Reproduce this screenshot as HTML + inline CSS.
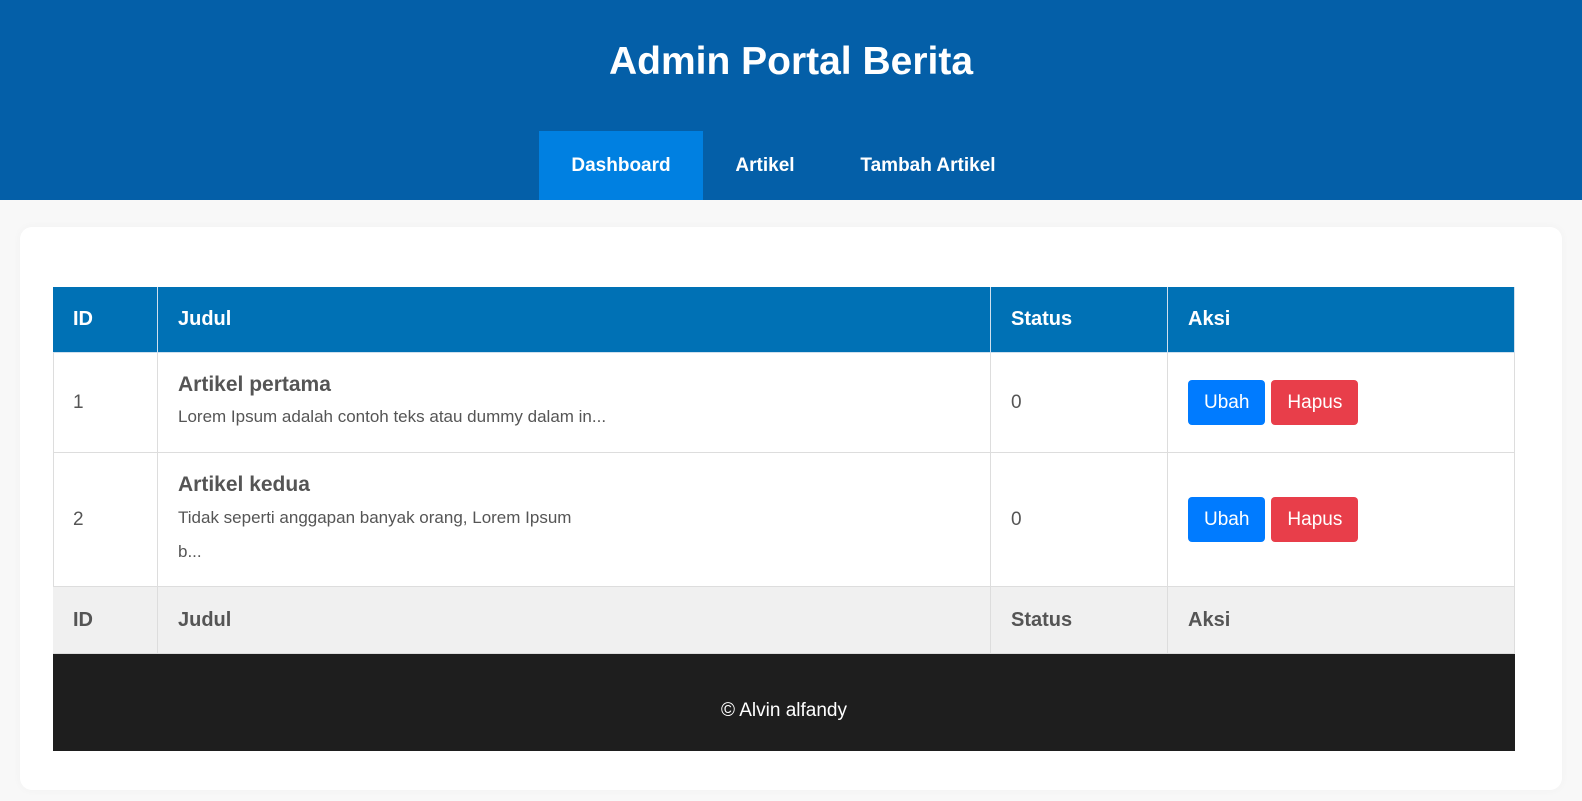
<!DOCTYPE html>
<html><head><meta charset="utf-8"><style>
*{box-sizing:border-box;margin:0;padding:0}
body{width:1582px;height:801px;background:#f8f8f8;font-family:"Liberation Sans",sans-serif;position:relative;overflow:hidden;color:#555}
.hdr{position:absolute;left:0;top:0;width:1582px;height:200px;background:#045fa8}
.hdr h1{position:absolute;top:40px;width:100%;text-align:center;color:#fff;font-size:39px;font-weight:bold}
.nav a{position:absolute;top:131px;height:69px;line-height:69px;color:#fff;font-weight:bold;font-size:19px;text-align:center}
.card{position:absolute;left:20px;top:227px;width:1542px;height:563px;background:#fff;border-radius:12px;box-shadow:0 0 10px rgba(0,0,0,.03)}
.c{position:absolute;border-right:1px solid #ddd;border-bottom:1px solid #ddd}
.th{background:#0071b5;color:#fff;font-weight:bold;font-size:20px;padding-left:20px;display:flex;align-items:center;border-color:#cfe0ee}
.tf{background:#f0f0f0;color:#555;font-weight:bold;font-size:20px;padding-left:20px;display:flex;align-items:center}
.td{font-size:19px;padding-left:20px;display:flex;align-items:center;color:#555}
.btn{display:inline-block;color:#fff;font-size:19px;height:45px;line-height:45px;border-radius:4px;padding:0 16px;margin-right:6px}
.b1{background:#007bff}.b2{background:#e83e4a}
</style></head><body>
<div class="hdr"><h1>Admin Portal Berita</h1>
<div class="nav"><a style="left:539px;width:164px;background:#0080e1">Dashboard</a><a style="left:703px;width:124px">Artikel</a><a style="left:827px;width:202px">Tambah Artikel</a></div></div>
<div class="card"></div>
<div style="position:absolute;left:53px;top:287px;width:1462px;height:367px;border-left:1px solid #ddd;border-top:1px solid #ddd"></div>
<div class="c th" style="left:53px;top:287px;width:105px;height:66px">ID</div>
<div class="c th" style="left:158px;top:287px;width:833px;height:66px">Judul</div>
<div class="c th" style="left:991px;top:287px;width:177px;height:66px">Status</div>
<div class="c th" style="left:1168px;top:287px;width:347px;height:66px">Aksi</div>

<div class="c td" style="left:53px;top:353px;width:105px;height:100px">1</div>
<div class="c td" style="left:158px;top:353px;width:833px;height:100px;display:block;padding-top:20px"><div style="font-weight:bold;font-size:21px">Artikel pertama</div><div style="font-size:17px;margin-top:10px">Lorem Ipsum adalah contoh teks atau dummy dalam in...</div></div>
<div class="c td" style="left:991px;top:353px;width:177px;height:100px">0</div>
<div class="c td" style="left:1168px;top:353px;width:347px;height:100px"><span class="btn b1">Ubah</span><span class="btn b2">Hapus</span></div>

<div class="c td" style="left:53px;top:453px;width:105px;height:134px">2</div>
<div class="c td" style="left:158px;top:453px;width:833px;height:134px;display:block;padding-top:20px"><div style="font-weight:bold;font-size:21px">Artikel kedua</div><div style="font-size:17px;margin-top:4px;line-height:34px">Tidak seperti anggapan banyak orang, Lorem Ipsum<br>b...</div></div>
<div class="c td" style="left:991px;top:453px;width:177px;height:134px">0</div>
<div class="c td" style="left:1168px;top:453px;width:347px;height:134px"><span class="btn b1">Ubah</span><span class="btn b2">Hapus</span></div>

<div class="c tf" style="left:53px;top:587px;width:105px;height:67px">ID</div>
<div class="c tf" style="left:158px;top:587px;width:833px;height:67px">Judul</div>
<div class="c tf" style="left:991px;top:587px;width:177px;height:67px">Status</div>
<div class="c tf" style="left:1168px;top:587px;width:347px;height:67px">Aksi</div>

<div style="position:absolute;left:53px;top:654px;width:1462px;height:97px;background:#1e1e1e;color:#fff;font-size:19px;text-align:center;line-height:114px">© Alvin alfandy</div>
</body></html>
